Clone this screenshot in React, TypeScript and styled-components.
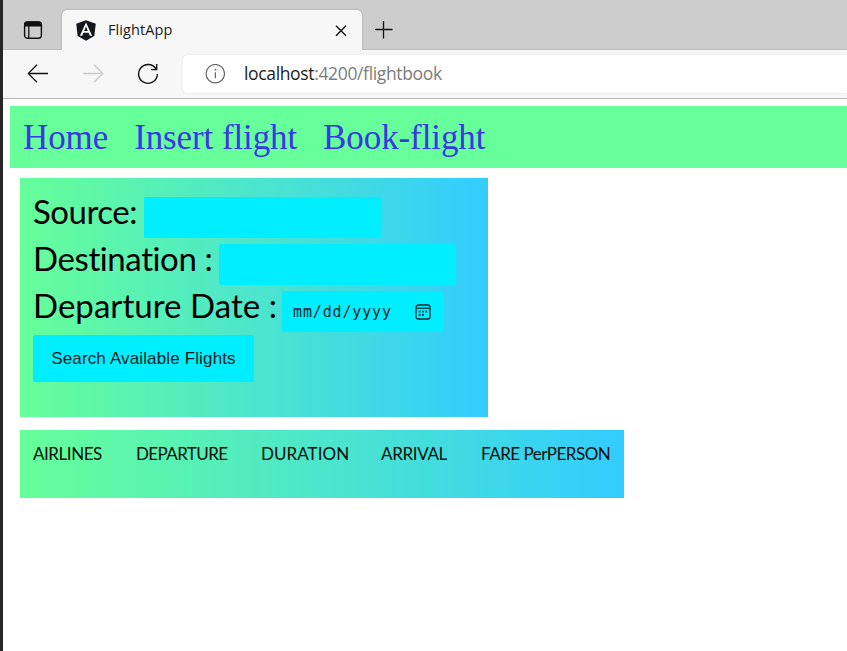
import React from 'react';
import styled, { createGlobalStyle } from 'styled-components';

const GlobalStyle = createGlobalStyle`
  * { box-sizing: border-box; }
  body { margin: 0; background: #fff; overflow: hidden; }
`;

const Window = styled.div`
  width: 847px;
  height: 651px;
  border-left: 3px solid #272727;
  background: #fff;
  overflow: hidden;
`;

const TabStrip = styled.div`
  display: flex;
  height: 50px;
  padding-top: 10px;
  background: #cdcdcd;
  box-shadow: inset 0 -1px 0 #bebebe;
`;

const StripButton = styled.div<{ $width: number }>`
  display: flex;
  align-items: center;
  justify-content: center;
  width: ${(p) => p.$width}px;
  height: 40px;
`;

const Tab = styled.div`
  display: flex;
  align-items: center;
  width: 300px;
  height: 40px;
  padding: 0 14px 0 14px;
  background: #f7f7f7;
  border-radius: 5px 5px 0 0;
  box-shadow: 0 0 2px rgba(0, 0, 0, 0.25);
  clip-path: inset(-3px -3px 0 -3px);
`;

const TabTitle = styled.span`
  flex: 1;
  margin-left: 12px;
  font: 400 14.5px/20px 'Open Sans', sans-serif;
  letter-spacing: 0.08px;
  color: #1c1c1c;
`;

const Toolbar = styled.div`
  display: flex;
  align-items: center;
  height: 49px;
  padding-left: 24px;
  background: #f7f7f7;
  border-bottom: 1px solid #b8b8b8;
`;

const ToolButton = styled.div<{ $gap: number }>`
  display: flex;
  width: 22px;
  height: 22px;
  margin-right: ${(p) => p.$gap}px;
`;

const AddressBar = styled.div`
  display: flex;
  align-items: center;
  flex: 1;
  height: 38px;
  padding-left: 22px;
  background: #fff;
  border-radius: 5px 0 0 5px;
  box-shadow: 0 0 3px rgba(0, 0, 0, 0.08);
`;

const Url = styled.span`
  margin: 0 0 2px 19px;
  font: 400 17.5px/24px 'Open Sans', sans-serif;
  letter-spacing: -0.35px;
  color: #7c7c7c;
`;

const Host = styled.span`
  color: #1c1c1c;
`;

const Nav = styled.nav`
  display: flex;
  gap: 26px;
  height: 62px;
  margin: 7px 0 0 7px;
  padding: 12px 13px 10px;
  background: #66ff99;
`;

const NavLink = styled.a`
  font: 35px/40px 'Liberation Serif', serif;
  letter-spacing: -0.1px;
  color: #3a37e8;
  white-space: nowrap;
`;

const Panel = styled.section<{ $width: number; $height: number; $top: number }>`
  width: ${(p) => p.$width}px;
  height: ${(p) => p.$height}px;
  margin: ${(p) => p.$top}px 0 0 17px;
  padding: 13px;
  background: linear-gradient(90deg, #66ff99, #33ccff);
`;

const FieldRow = styled.div`
  display: flex;
  height: 47px;
`;

const Label = styled.label<{ $width: number; $spacing: number }>`
  width: ${(p) => p.$width}px;
  font: 33px/41px Lato, sans-serif;
  letter-spacing: ${(p) => p.$spacing}px;
  font-variant-ligatures: none;
  color: #000;
  white-space: nowrap;
`;

const Field = styled.div<{ $width: number }>`
  display: flex;
  align-items: center;
  justify-content: space-between;
  width: ${(p) => p.$width}px;
  height: 41px;
  margin-top: 6px;
  padding: 0 13px 0 11px;
  background: #00eeff;
  border-radius: 2px;
`;

const DateHint = styled.span`
  font: 15px/20px 'DejaVu Sans Mono', monospace;
  letter-spacing: 0.85px;
  color: #10242a;
`;

const SearchButton = styled.button`
  display: block;
  width: 221px;
  height: 47px;
  margin-top: 3px;
  padding: 0;
  border: 0;
  border-radius: 2px;
  background: #00eeff;
  font: 17px/20px 'Liberation Sans', sans-serif;
  letter-spacing: 0.14px;
  color: #0c1c20;
  white-space: nowrap;
`;

const HeaderRow = styled.div`
  display: flex;
`;

const HeaderCell = styled.span<{ $width: number; $spacing: number }>`
  width: ${(p) => p.$width}px;
  flex: none;
  font: 17px/21px Lato, sans-serif;
  letter-spacing: ${(p) => p.$spacing}px;
  color: #001208;
  white-space: nowrap;
`;

const TabActionsIcon = () => (
  <svg width="20" height="20" viewBox="0 0 20 20" fill="none" stroke="#111">
    <rect x="1.6" y="1.9" width="16.8" height="16.4" rx="3" strokeWidth="1.4" />
    <path d="M1 6.4V4.5a3 3 0 0 1 3-3h12a3 3 0 0 1 3 3v1.9z" fill="#111" stroke="none" />
    <path d="M5.8 6v12" strokeWidth="1.3" />
  </svg>
);

const AngularIcon = () => (
  <svg width="20" height="21" viewBox="0 0 20 21">
    <path d="M10 .3 19.8 3.8 18.3 16 10 20.7 1.7 16 .2 3.8z" fill="#15171c" />
    <path d="M10 2.4 3.9 15.8h2.3l1.2-3h5.2l1.2 3h2.3zM10 6.6l1.8 4.3H8.2z" fill="#fff" fillRule="evenodd" />
  </svg>
);

const CloseIcon = () => (
  <svg width="14" height="14" viewBox="0 0 14 14" stroke="#111" strokeWidth="1.4">
    <path d="M2 2.8l10 10M12 2.8 2 12.8" />
  </svg>
);

const PlusIcon = () => (
  <svg width="18" height="18" viewBox="0 0 18 18" stroke="#111" strokeWidth="1.3">
    <path d="M0 8.5h17.5M8.5 0v17.5" />
  </svg>
);

const ArrowIcon = ({ color, flip }: { color: string; flip?: boolean }) => (
  <svg width="22" height="22" viewBox="0 0 22 22" fill="none" stroke={color} strokeWidth="1.3">
    <path d={flip ? 'M1 10.5h19.3M12 1.8l8.7 8.7-8.7 8.7' : 'M21 10.5H1.7M10 1.8 1.3 10.5l8.7 8.7'} />
  </svg>
);

const ReloadIcon = () => (
  <svg width="22" height="22" viewBox="0 0 22 22" fill="none" stroke="#111" strokeWidth="1.4">
    <path d="M19.2 6.3A9.4 9.4 0 1 0 20.4 11M19.7 1v5.6h-5.6" />
  </svg>
);

const InfoIcon = () => (
  <svg width="20" height="20" viewBox="0 0 20 20" fill="none" stroke="#666" strokeWidth="1.2">
    <circle cx="10.3" cy="9.7" r="9.2" />
    <path d="M10.4 8.3v6" />
    <circle cx="10.4" cy="5.7" r=".9" fill="#666" stroke="none" />
  </svg>
);

const CalendarIcon = () => (
  <svg width="16" height="16" viewBox="0 0 16 16" fill="none" stroke="#062a30" strokeWidth="1.3">
    <rect x="1" y="1" width="14" height="14" rx="2.2" />
    <path d="M1 4.2h14" strokeWidth="1.2" />
    <path d="M3.8 7.7h1.7M7.1 7.7h1.7M10.4 7.7h1.7M3.8 10.9h1.7M7.1 10.9h1.7" strokeWidth="1.7" />
  </svg>
);

const columns = [
  { title: 'AIRLINES', width: 103, spacing: -0.45 },
  { title: 'DEPARTURE', width: 125, spacing: -0.6 },
  { title: 'DURATION', width: 120, spacing: 0.05 },
  { title: 'ARRIVAL', width: 100, spacing: -0.35 },
  { title: 'FARE PerPERSON', width: 131, spacing: -0.5 },
];

export default function App() {
  return (
    <Window>
      <GlobalStyle />
      <TabStrip>
        <StripButton $width={59}><TabActionsIcon /></StripButton>
        <Tab>
          <AngularIcon />
          <TabTitle>FlightApp</TabTitle>
          <CloseIcon />
        </Tab>
        <StripButton $width={43}><PlusIcon /></StripButton>
      </TabStrip>
      <Toolbar>
        <ToolButton $gap={33}><ArrowIcon color="#111" /></ToolButton>
        <ToolButton $gap={33}><ArrowIcon color="#cacaca" flip /></ToolButton>
        <ToolButton $gap={24}><ReloadIcon /></ToolButton>
        <AddressBar>
          <InfoIcon />
          <Url><Host>localhost</Host>:4200/flightbook</Url>
        </AddressBar>
      </Toolbar>
      <Nav>
        <NavLink>Home</NavLink>
        <NavLink>Insert flight</NavLink>
        <NavLink>Book-flight</NavLink>
      </Nav>
      <Panel $width={468} $height={239} $top={10}>
        <FieldRow>
          <Label $width={111} $spacing={-0.5}>Source:</Label>
          <Field $width={238} />
        </FieldRow>
        <FieldRow>
          <Label $width={186} $spacing={-0.4}>Destination :</Label>
          <Field $width={237} />
        </FieldRow>
        <FieldRow>
          <Label $width={249} $spacing={0.04}>Departure Date :</Label>
          <Field $width={162}>
            <DateHint>mm/dd/yyyy</DateHint>
            <CalendarIcon />
          </Field>
        </FieldRow>
        <SearchButton>Search Available Flights</SearchButton>
      </Panel>
      <Panel $width={604} $height={68} $top={13}>
        <HeaderRow>
          {columns.map((c) => (
            <HeaderCell key={c.title} $width={c.width} $spacing={c.spacing}>{c.title}</HeaderCell>
          ))}
        </HeaderRow>
      </Panel>
    </Window>
  );
}
